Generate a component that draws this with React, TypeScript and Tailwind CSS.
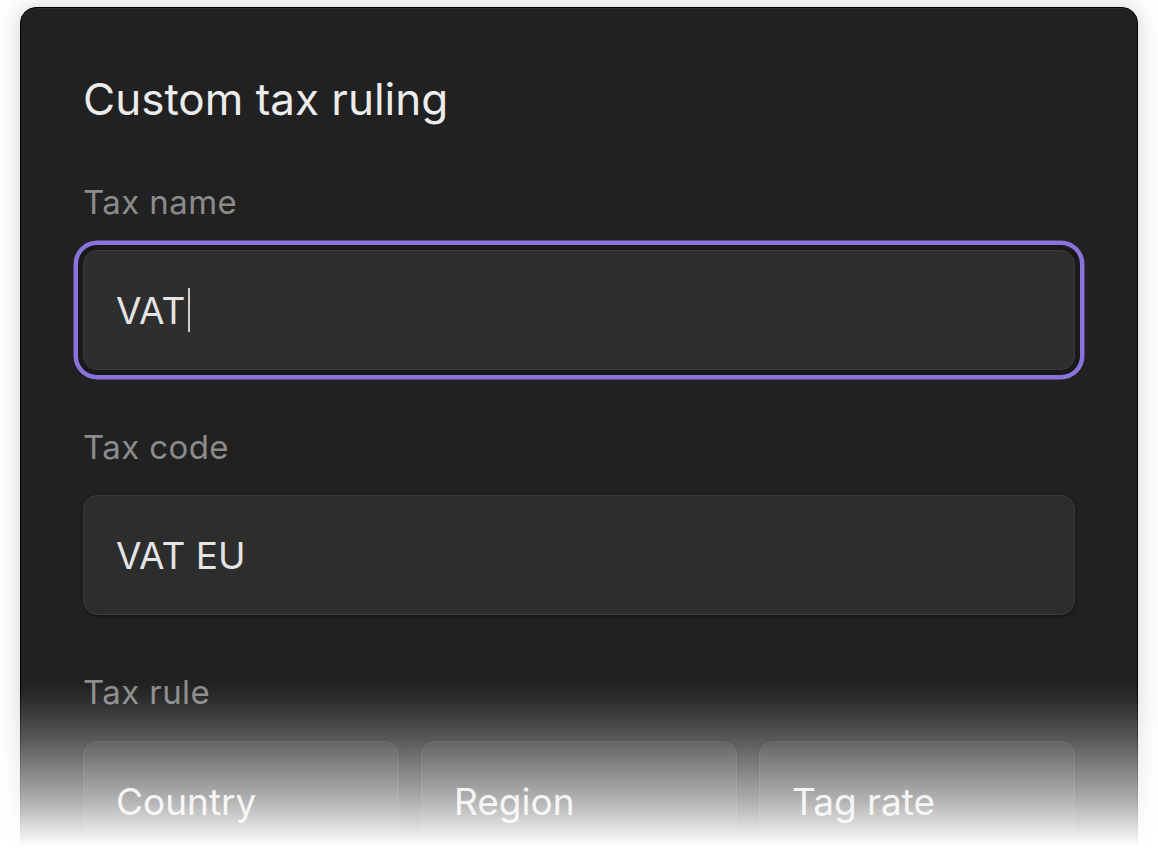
export default function App() {
  const font = { fontFamily: 'Inter, "Noto Sans", sans-serif' }
  return (
    <div className="relative h-[850px] w-[1158px] overflow-hidden bg-white" style={font}>
      <div className="ml-[20px] mt-[7px] h-[900px] w-[1118px] rounded-[16px] border-[1.5px] border-black bg-[#212121] px-[62px] pt-[69px] shadow-[0_0_24px_rgba(0,0,0,0.18),inset_0_1px_0_rgba(255,255,255,0.07)]">
        <h1 className="text-[44px] leading-[44px] font-normal text-[#ececec]">Custom tax ruling</h1>

        <div className="mt-[65px] text-[33px] leading-[32px] tracking-[0.4px] text-[#8b8b8b]">Tax name</div>
        <div className="mt-[32px] flex h-[120px] items-center rounded-[14px] border border-[#3b3b3b] bg-[#2e2e2e] px-[32px] shadow-[0_0_0_5px_#191919,0_0_0_9.5px_#8a73dd]">
          <span className="text-[37px] leading-none text-[#e4e4e4]">VAT</span>
          <span className="ml-[3px] inline-block h-[44px] w-[2px] bg-[#cfcfcf]" />
        </div>

        <div className="mt-[61px] text-[33px] leading-[32px] tracking-[0.4px] text-[#8b8b8b]">Tax code</div>
        <div className="mt-[32px] flex h-[120px] items-center rounded-[14px] border border-[#3b3b3b] bg-[#2d2d2d] px-[32px] shadow-[0_1px_3px_rgba(0,0,0,0.5)]">
          <span className="text-[37px] leading-none text-[#e4e4e4]">VAT EU</span>
        </div>

        <div className="mt-[61px] text-[33px] leading-[32px] tracking-[0.4px] text-[#8b8b8b]">Tax rule</div>
        <div className="mt-[33px] grid grid-cols-3 gap-[22px]">
          {['Country', 'Region', 'Tag rate'].map((item) => (
            <div
              key={item}
              className="flex h-[120px] items-center rounded-[14px] border border-[#3b3b3b] bg-[#2d2d2d] px-[32px] shadow-[0_1px_3px_rgba(0,0,0,0.5)]"
            >
              <span className="text-[37px] leading-none text-[#e4e4e4]">{item}</span>
            </div>
          ))}
        </div>
      </div>

      <div className="pointer-events-none absolute bottom-0 left-0 h-[168px] w-full bg-[linear-gradient(to_bottom,rgba(255,255,255,0)_0%,rgba(255,255,255,0.05)_10%,rgba(255,255,255,0.24)_33%,rgba(255,255,255,0.63)_70%,rgba(255,255,255,1)_98%)]" />
    </div>
  )
}
